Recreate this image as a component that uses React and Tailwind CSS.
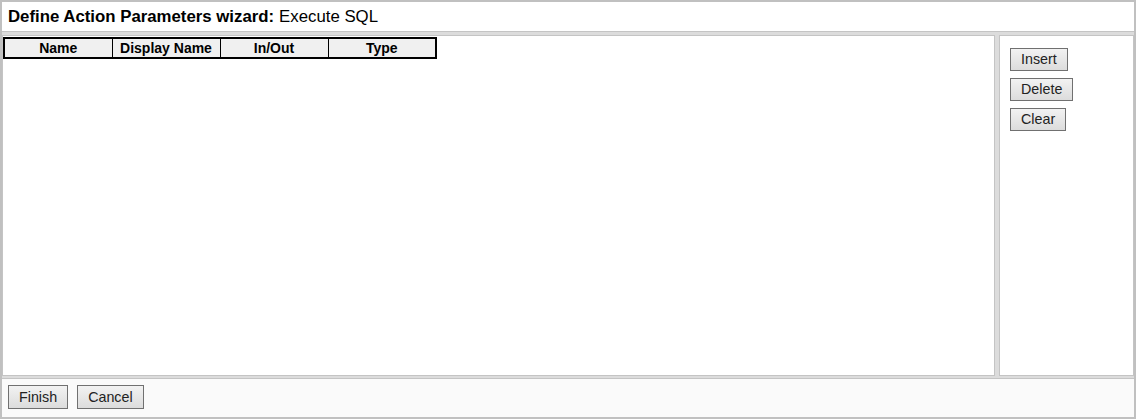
const btn =
	"border border-[#707070] bg-gradient-to-b from-[#f2f2f2] to-[#dcdcdc] px-[10px] h-[24px] text-[14.3px] leading-none text-[#222]";

export default function App() {
	const cols = ["Name", "Display Name", "In/Out", "Type"];
	return (
		<div className="flex h-[419px] w-[1136px] flex-col border-2 border-[#c0c0c0] bg-[#dcdcdc] font-['Liberation_Sans',Arial,sans-serif]">
			<div className="flex h-[30px] shrink-0 items-center border-b border-[#c4c4c4] bg-white px-[6px] text-[16.8px] text-black">
				<span className="font-bold">Define Action Parameters wizard:</span>
				<span className="ml-[5px]">Execute SQL</span>
			</div>

			<div className="mt-[3px] flex h-[341px] shrink-0 gap-[4px]">
				<div className="flex-1 border border-[#c4c4c4] bg-white">
					<table className="mt-px border-collapse border-2 border-black text-[14px]">
						<thead>
							<tr className="h-[20px] bg-[#f0f0f0]">
								{cols.map((c) => (
									<th
										key={c}
										className="w-[108px] border border-black p-0 text-center font-bold leading-none text-black"
									>
										{c}
									</th>
								))}
							</tr>
						</thead>
					</table>
				</div>
				<div className="flex w-[135px] flex-col items-start gap-[7px] border border-[#c4c4c4] bg-white px-[10px] pt-[12px]">
					<button type="button" className={`${btn} !h-[23px]`}>
						Insert
					</button>
					<button type="button" className={`${btn} !h-[23px]`}>
						Delete
					</button>
					<button type="button" className={`${btn} !h-[23px]`}>
						Clear
					</button>
				</div>
			</div>

			<div className="mt-[2px] flex flex-1 items-start gap-[9px] border-t border-[#c4c4c4] bg-[#fafafa] px-[6px] pt-[6px]">
				<button type="button" className={btn}>
					Finish
				</button>
				<button type="button" className={btn}>
					Cancel
				</button>
			</div>
		</div>
	);
}
